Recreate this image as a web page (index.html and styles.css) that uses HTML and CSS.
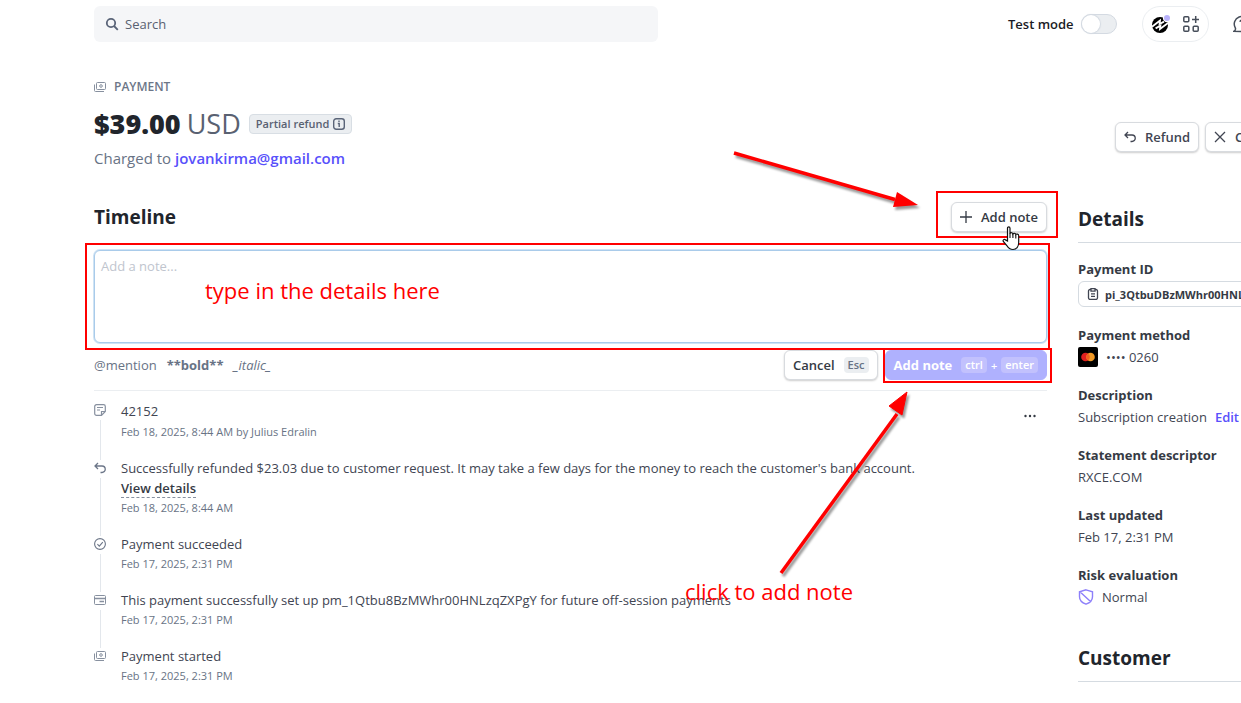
FILE: index.html
```html
<!DOCTYPE html>
<html lang="en">
<head>
    <meta charset="UTF-8">
    <meta name="viewport" content="width=device-width, initial-scale=1.0">
    <title>Payment details</title>
    <link rel="stylesheet" href="styles.css">
</head>
<body>
    <div class="page">
        <header class="topbar">
            <div class="search">
                <svg width="14" height="14" viewBox="0 0 14 14" fill="none" stroke="#5a6478" stroke-width="1.800"><circle cx="6" cy="6" r="4.200"/><path d="M9 9l3.800 3.800"/></svg>
                <input type="search" placeholder="Search" aria-label="Search">
            </div>
            <div class="tools">
                <label class="switch-label" for="test-mode">Test mode</label>
                <input type="checkbox" id="test-mode" class="switch">
                <div class="tool-group">
                    <button class="icon-button" aria-label="Workbench">
                        <svg width="20" height="20" viewBox="0 0 20 20"><circle cx="9" cy="11" r="8" fill="#000"/><path d="M1 12.800L9 6.600L8.600 10L13 7.600" fill="none" stroke="#fff" stroke-width="1.800"/><path d="M4.600 14.400L9.400 11.600L9 15L17 9" fill="none" stroke="#fff" stroke-width="1.800"/><circle cx="16" cy="4" r="4.200" fill="#fff"/><circle cx="16" cy="4" r="3" fill="#b9b2fb"/></svg>
                    </button>
                    <button class="icon-button" aria-label="Apps">
                        <svg width="16" height="16" viewBox="0 0 16 16" fill="none" stroke="#474e5a" stroke-width="1.500"><rect x="0.800" y="0.800" width="5" height="5" rx="1"/><rect x="0.800" y="10.200" width="5" height="5" rx="1"/><rect x="10.200" y="10.200" width="5" height="5" rx="1"/><path d="M12.700 0v7M9 3.500h7"/></svg>
                    </button>
                </div>
                <button class="icon-button help" aria-label="Help">
                    <svg width="18" height="18" viewBox="0 0 18 18" fill="none" stroke="#474e5a" stroke-width="1.500"><path d="M1 16.200c1.500-.8 1.800-2 1.300-3.400A7.500 7.500 0 1 1 9 16.500z"/><path d="M7 6.800c.3-2.400 4.300-2.200 4 .2-.2 1.300-2 1.400-2 3M9 11.500v1.500"/></svg>
                </button>
            </div>
        </header>

        <section class="summary">
            <div>
                <div class="eyebrow">
                    <svg width="12" height="12" viewBox="0 0 12 12" fill="none" stroke="#87909f"><rect x="2.500" y="1.500" width="9" height="7" rx="1"/><path d="M.5 3.500v6a1 1 0 0 0 1 1H10"/><circle cx="7" cy="5" r="1.300"/></svg>
                    PAYMENT
                </div>
                <h1><b>$39.00</b> <span class="currency">USD</span>
                    <span class="badge">Partial refund
                        <svg width="12" height="12" viewBox="0 0 12 12" fill="none" stroke="#5a6478" stroke-width="1.400"><rect x=".7" y=".7" width="10.600" height="10.600" rx="2.500"/><path d="M4.800 5.500H6.200V9M6 2.600v1.500"/></svg>
                    </span>
                </h1>
                <p class="charged">Charged to <a href="#">jovankirma@gmail.com</a></p>
            </div>
            <div class="summary-actions">
                <button class="button">
                    <svg width="12" height="12" viewBox="0 0 12 12" fill="none" stroke="#414552" stroke-width="1.300"><path d="M4 1L1 4l3 3M1 4h7a3 3 0 0 1 0 6.500H6.500"/></svg>
                    Refund
                </button>
                <button class="button">
                    <svg width="12" height="12" viewBox="0 0 12 12" fill="none" stroke="#414552" stroke-width="1.300"><path d="M1 1l10 10M11 1L1 11"/></svg>
                    Cancel
                </button>
            </div>
        </section>

        <div class="columns">
            <main class="timeline">
                <div class="timeline-head">
                    <h2>Timeline</h2>
                    <div class="marked marked-open">
                        <button class="button dark">
                            <svg width="12" height="12" viewBox="0 0 12 12" fill="none" stroke="#353a44" stroke-width="1.300"><path d="M6 0v12M0 6h12"/></svg>
                            Add note
                        </button>
                        <svg class="cursor" width="18" height="25" viewBox="0 0 18 25"><path d="M5.500 15V2.200C5.500.5 8 .5 8 2.200V7.500c.6-1.200 2.700-1 2.900.4.6-1 2.700-.8 2.900.6.600-.8 2.900-.6 2.900 1.200V16c0 4.500-2 7.500-5.700 7.500-3.300 0-4.500-1-6-3.700L1.300 15.500c-.8-1.600 1-2.900 2.200-1.600z" fill="#fff" stroke="#111" stroke-width="1.200"/><path d="M8 7v5M10.900 8v4M13.800 9v3.500" stroke="#111" stroke-width="1.100"/></svg>
                    </div>
                </div>

                <form class="note-form">
                    <div class="marked marked-text">
                        <textarea placeholder="Add a note..." aria-label="Add a note"></textarea>
                        <span class="callout callout-type">type in the details here</span>
                    </div>
                    <div class="note-footer">
                        <div class="hints"><span>@mention</span><b>**bold**</b><i>_italic_</i></div>
                        <button type="button" class="button dark">Cancel <kbd>Esc</kbd></button>
                        <div class="marked marked-submit">
                            <button type="button" class="button primary">Add note <span class="keys"><kbd>ctrl</kbd>+<kbd>enter</kbd></span></button>
                        </div>
                    </div>
                </form>

                <ol class="events">
                    <li>
                        <svg width="12" height="12" viewBox="0 0 12 12" fill="none" stroke="#87909f" stroke-width="1.200"><path d="M7.500 11.300H2.500a1.800 1.800 0 0 1-1.800-1.800v-7A1.800 1.800 0 0 1 2.500.7h7a1.800 1.800 0 0 1 1.800 1.800v5zM7.500 11V7.500H11M3 3.500h6M3 6h3"/></svg>
                        <div class="event">
                            <p class="event-note">42152</p>
                            <time>Feb 18, 2025, 8:44 AM by Julius Edralin</time>
                        </div>
                        <button class="more" aria-label="More actions">
                            <svg width="12" height="4" viewBox="0 0 12 4" fill="#353a44"><circle cx="1.500" cy="2" r="1.200"/><circle cx="6" cy="2" r="1.200"/><circle cx="10.500" cy="2" r="1.200"/></svg>
                        </button>
                    </li>
                    <li>
                        <svg width="12" height="12" viewBox="0 0 12 12" fill="none" stroke="#6c7688" stroke-width="1.300"><path d="M4 1L1 4l3 3M1 4h7a3 3 0 0 1 0 6.500H6.500"/></svg>
                        <div class="event">
                            <p>Successfully refunded $23.03 due to customer request. It may take a few days for the money to reach the customer's bank account.</p>
                            <p><a href="#" class="view">View details</a></p>
                            <time>Feb 18, 2025, 8:44 AM</time>
                        </div>
                    </li>
                    <li>
                        <svg width="12" height="12" viewBox="0 0 12 12" fill="none" stroke="#6c7688" stroke-width="1.100"><circle cx="6" cy="6" r="5.400"/><path d="M3.400 6.200l1.900 1.900 3.500-3.900"/></svg>
                        <div class="event">
                            <p>Payment succeeded</p>
                            <time>Feb 17, 2025, 2:31 PM</time>
                        </div>
                    </li>
                    <li>
                        <svg width="12" height="12" viewBox="0 0 12 12" fill="none" stroke="#87909f"><rect x=".5" y="1.500" width="11" height="9" rx="1"/><path d="M.5 4.500h11M5.500 7.500H10" stroke-width="1.300"/></svg>
                        <div class="event">
                            <p>This payment successfully set up pm_1Qtbu8BzMWhr00HNLzqZXPgY for future off-session payments</p>
                            <time>Feb 17, 2025, 2:31 PM</time>
                        </div>
                    </li>
                    <li>
                        <svg width="12" height="12" viewBox="0 0 12 12" fill="none" stroke="#87909f"><rect x="2.500" y="1.500" width="9" height="7" rx="1"/><path d="M.5 3.500v6a1 1 0 0 0 1 1H10"/><circle cx="7" cy="5" r="1.300"/></svg>
                        <div class="event">
                            <p>Payment started</p>
                            <time>Feb 17, 2025, 2:31 PM</time>
                        </div>
                    </li>
                </ol>

                <!-- callout arrows -->
                <svg class="arrow arrow-open" width="190" height="68" viewBox="0 0 190 68"><path d="M1 3L162 49.500" stroke="#f00" stroke-width="3.500"/><path d="M164 42L185 55L160 57z" fill="#f00"/></svg>
                <svg class="arrow arrow-submit" width="138" height="190" viewBox="0 0 138 190"><path d="M2 183L118 24" stroke="#f00" stroke-width="3.500"/><path d="M128 2L110 16L123 25z" fill="#f00" stroke="#f00"/></svg>
                <span class="callout callout-click">click to add note</span>
            </main>

            <aside class="details">
                <h2>Details</h2>
                <dl>
                    <dt>Payment ID</dt>
                    <dd><button class="chip">
                        <svg width="12" height="12" viewBox="0 0 12 12" fill="none" stroke="#414552" stroke-width="1.300"><path d="M4 1.500H3A1.500 1.500 0 0 0 1.500 3v7A1.500 1.500 0 0 0 3 11.400h6a1.500 1.500 0 0 0 1.500-1.400V3A1.500 1.500 0 0 0 9 1.500H8M4 .7h4v2.500H4zM4 5.800h4M4 8.300h4"/></svg>
                        pi_3QtbuDBzMWhr00HNLzqZXPgY</button></dd>
                    <dt>Payment method</dt>
                    <dd><svg width="20" height="20" viewBox="0 0 20 20"><rect width="20" height="20" rx="2" fill="#000"/><circle cx="7.500" cy="10" r="4.300" fill="#e02020"/><circle cx="12.500" cy="10" r="4.300" fill="#f29a26"/><path d="M10 6.500a4.300 4.300 0 0 1 0 7a4.300 4.300 0 0 1 0-7z" fill="#f06020"/></svg>•••• 0260</dd>
                    <dt>Description</dt>
                    <dd>Subscription creation <a href="#">Edit</a></dd>
                    <dt>Statement descriptor</dt>
                    <dd>RXCE.COM</dd>
                    <dt>Last updated</dt>
                    <dd>Feb 17, 2:31 PM</dd>
                    <dt>Risk evaluation</dt>
                    <dd><svg width="16" height="16" viewBox="0 0 16 16" fill="none" stroke="#8d7ffa" stroke-width="1.400"><path d="M8 .8l6.500 2v5c0 3.500-2.500 6-6.500 7.400C4 13.800 1.500 11.300 1.500 7.800v-5zM2.200 3l10.300 9.500"/></svg>Normal</dd>
                </dl>
                <h2>Customer</h2>
            </aside>
        </div>
    </div>
</body>
</html>
```
FILE: styles.css
```css
* {
    box-sizing: border-box;
}

body {
    margin: 0;
    background: #fff;
    color: #414552;
    font-family: "Open Sans", "Noto Sans", sans-serif;
    font-size: 13px;
    line-height: 20px;
}

button, input, textarea, kbd {
    font-family: inherit;
}

h1, h2, p, dl, dd, ol {
    margin: 0;
    padding: 0;
}

svg {
    flex: none;
}

a {
    color: #5851fb;
    font-weight: 600;
    text-decoration: none;
}

.page {
    min-height: 100vh;
    padding: 6px 0 0 94px;
    overflow: hidden;
}

/* top bar */
.topbar {
    display: flex;
    align-items: center;
    justify-content: space-between;
    height: 36px;
}

.search {
    display: flex;
    align-items: center;
    gap: 6px;
    width: 564px;
    height: 36px;
    padding: 0 11px;
    border-radius: 6px;
    background: #f5f6f8;
}

.search input {
    flex: 1;
    padding: 0;
    border: 0;
    outline: 0;
    background: none;
    font-size: 13px;
}

.search input::placeholder {
    color: #596171;
}

.tools {
    display: flex;
    align-items: center;
    width: 233px;
}

.switch-label {
    margin-right: 7px;
    color: #1a1b25;
    font-weight: 600;
    white-space: nowrap;
}

.switch {
    appearance: none;
    flex: none;
    width: 36px;
    height: 20px;
    margin: 0;
    border: 1px solid #d4dae2;
    border-radius: 10px;
    background: #ebeef1;
}

.switch::before {
    content: "";
    display: block;
    width: 18px;
    height: 18px;
    border-radius: 50%;
    background: #fff;
    box-shadow: 0 0 1px 1px #d4dae2;
}

.tool-group {
    display: flex;
    align-items: center;
    gap: 12px;
    flex: none;
    height: 36px;
    margin: 0 24px 0 25px;
    padding: 0 9px 0 8px;
    border: 1px solid #ebeef1;
    border-radius: 18px;
}

.icon-button {
    display: flex;
    flex: none;
    padding: 0;
    border: 0;
    background: none;
}

/* payment summary */
.summary {
    display: flex;
    justify-content: space-between;
    padding-top: 35px;
}

.eyebrow {
    display: flex;
    align-items: center;
    gap: 8px;
    color: #6c7688;
    font-size: 12px;
    font-weight: 600;
}

h1 {
    display: flex;
    align-items: center;
    gap: 6px;
    margin-top: 9px;
    color: #21252c;
    font-size: 27px;
    line-height: 36px;
}

.currency {
    color: #596171;
    font-weight: 400;
}

.badge {
    display: flex;
    align-items: center;
    gap: 4px;
    height: 20px;
    margin-left: 2px;
    padding: 0 6px;
    border: 1px solid #d8dee4;
    border-radius: 4px;
    background: #ebeef1;
    color: #596171;
    font-size: 11px;
    font-weight: 600;
    line-height: 18px;
}

.charged {
    margin-top: 4px;
    color: #687385;
    font-size: 15px;
    line-height: 24px;
}

.summary-actions {
    display: flex;
    gap: 6px;
    width: 126px;
    margin-top: 45px;
}

.button {
    display: flex;
    flex: none;
    align-items: center;
    gap: 9px;
    height: 30px;
    padding: 0 8px;
    border: 1px solid #d8dbdf;
    border-radius: 6px;
    background: #fff;
    box-shadow: 0 1px 2px rgba(0, 0, 0, 0.2);
    color: #414552;
    font-size: 13px;
    font-weight: 600;
    white-space: nowrap;
}

.dark {
    color: #353a44;
}

kbd {
    padding: 0 4px;
    border-radius: 4px;
    background: #ebeef1;
    color: #687385;
    font-size: 11px;
    line-height: 16px;
}

.primary {
    border-color: #afb1fe;
    background: #afb1fe;
    box-shadow: none;
    color: #fff;
    font-weight: 700;
}

.keys {
    display: flex;
    align-items: center;
    gap: 4px;
    font-size: 11px;
    font-weight: 600;
}

.primary kbd {
    background: #c2c1fd;
    color: #fff;
}

/* columns */
.columns {
    display: flex;
    gap: 31px;
    margin-top: 32px;
}

.timeline {
    position: relative;
    flex: 1;
    min-width: 0;
}

h2 {
    color: #21252c;
    font-size: 19px;
    line-height: 24px;
}

.timeline-head {
    display: flex;
    align-items: center;
    justify-content: space-between;
    height: 30px;
}

.marked {
    position: relative;
}

.marked::after {
    content: "";
    position: absolute;
    border: 2px solid #f00;
    pointer-events: none;
}

.marked-open::after {
    inset: -11px -11px -6px -15px;
}

.marked-text::after {
    inset: -7px -3px -7px -9px;
}

.marked-submit::after {
    inset: -2px -5px -3px -2px;
}

.cursor {
    position: absolute;
    right: 27px;
    top: 24px;
    z-index: 2;
}

.note-form {
    margin-top: 18px;
    padding-bottom: 10px;
    border-bottom: 1px solid #ebeef1;
}

textarea {
    display: block;
    width: 100%;
    height: 93px;
    padding: 5px 6px;
    border: 1px solid #a9cbea;
    border-radius: 6px;
    outline: 0;
    box-shadow: 0 0 0 1px #cfe3f4;
    font-size: 13px;
    line-height: 20px;
    resize: none;
}

textarea::placeholder {
    color: #c0c5ce;
}

.note-footer {
    display: flex;
    align-items: center;
    gap: 7px;
    margin-top: 7px;
}

.hints {
    display: flex;
    flex: 1;
    gap: 10px;
    color: #687385;
}

/* events */
.events {
    display: flex;
    flex-direction: column;
    gap: 16px;
    padding-top: 9px;
    list-style: none;
}

.events li {
    position: relative;
    display: flex;
    gap: 15px;
}

.events li > svg {
    margin-top: 4px;
}

/* line that joins one event icon to the next */
.events li:not(:last-child)::before {
    content: "";
    position: absolute;
    left: 6px;
    top: 20px;
    bottom: -18px;
    border-left: 1px solid #e3e7ec;
}

.event {
    flex: 1;
}

.event-note {
    line-height: 22px;
}

.event time {
    display: block;
    color: #687385;
    font-size: 11px;
}

.view {
    border-bottom: 1px dashed #87909f;
    color: #353a44;
}

.more {
    align-self: flex-start;
    margin: 4px 11px 0 0;
    padding: 0;
    border: 0;
    background: none;
}

/* details */
.details {
    width: 163px;
    padding-top: 5px;
    white-space: nowrap;
}

.details h2 {
    padding-bottom: 11px;
    border-bottom: 1px solid #d5dbe1;
}

.details dl {
    margin: 16px 0 39px;
}

.details dt {
    color: #353a44;
    font-weight: 700;
}

.details dd {
    display: flex;
    align-items: center;
    gap: 8px;
    margin: 2px 0 18px;
}

.chip {
    display: flex;
    flex: none;
    align-items: center;
    gap: 6px;
    height: 26px;
    padding: 0 8px;
    border: 1px solid #d5dbe1;
    border-radius: 6px;
    background: #fff;
    color: #353a44;
    font-size: 11px;
    font-weight: 700;
}

/* callouts */
.callout {
    position: absolute;
    color: #f00;
    font-size: 22px;
    line-height: 28px;
    white-space: nowrap;
    pointer-events: none;
}

.callout-type {
    left: 111px;
    top: 26px;
}

.callout-click {
    left: 591px;
    top: 375px;
}

.arrow {
    position: absolute;
    filter: drop-shadow(2px 3px 1px rgba(0, 0, 0, 0.4));
    pointer-events: none;
}

.arrow-open {
    left: 639px;
    top: -52px;
}

.arrow-submit {
    left: 685px;
    top: 188px;
}
```
